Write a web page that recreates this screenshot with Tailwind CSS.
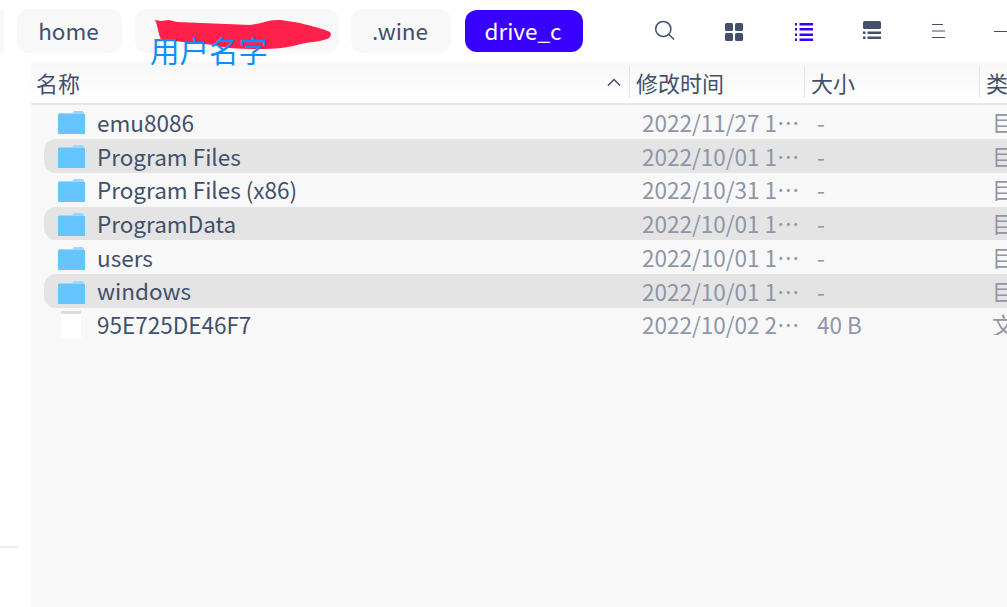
<!DOCTYPE html>
<html lang="zh">
<head>
<meta charset="UTF-8">
<title>drive_c</title>
<script src="https://cdn.jsdelivr.net/npm/@tailwindcss/browser@4"></script>
</head>
<body class="w-[1007px] h-[607px] overflow-hidden bg-white relative font-['Noto_Sans_CJK_SC','Noto_Sans',sans-serif] text-[#42506b]">

<!-- top bar -->
<div class="h-[62px] flex items-center relative">
  <div class="w-[4px] h-[44px] bg-[#f8f8f8] rounded-r-lg mr-[13px]"></div>
  <div class="w-[105px] h-[44px] bg-[#f8f8f8] rounded-xl flex items-center justify-center text-[22.5px] leading-none mr-[13px] pb-[2px] pr-[2px]">home</div>
  <div class="w-[204px] h-[44px] bg-[#f8f8f8] rounded-xl mr-[12px]"></div>
  <div class="w-[100px] h-[44px] bg-[#f8f8f8] rounded-xl flex items-center justify-center text-[22.5px] leading-none mr-[14px] pb-[2px] pr-[2px]">.wine</div>
  <div class="w-[118px] h-[42px] bg-[#3700ff] rounded-xl flex items-center justify-center text-[22.5px] leading-none text-white pb-[2px] pr-[2px]">drive_c</div>

  <svg class="absolute left-[654px] top-[20px] w-[21px] h-[21px]" viewBox="0 0 21 21" fill="none" stroke="#42506b" stroke-width="1.5"><circle cx="9.3" cy="9" r="7.6"/><path d="M15 14.5l5 5"/></svg>
  <svg class="absolute left-[725px] top-[23px] w-[18px] h-[18px]" viewBox="0 0 18 18" fill="#42506b"><rect width="8" height="8" rx="1.5"/><rect x="10" width="8" height="8" rx="1.5"/><rect y="10" width="8" height="8" rx="1.5"/><rect x="10" y="10" width="8" height="8" rx="1.5"/></svg>
  <svg class="absolute left-[795px] top-[23px] w-[18px] h-[18px]" viewBox="0 0 18 18" fill="#3700ff"><rect width="2" height="2.5"/><rect x="4.5" width="13.5" height="2.5"/><rect y="5" width="2" height="2.5"/><rect x="4.5" y="5" width="13.5" height="2.5"/><rect y="10.5" width="2" height="2.5"/><rect x="4.5" y="10.5" width="13.5" height="2.5"/><rect y="15.5" width="2" height="2.5"/><rect x="4.5" y="15.5" width="13.5" height="2.5"/></svg>
  <svg class="absolute left-[863px] top-[21px] w-[18px] h-[19px]" viewBox="0 0 18 19" fill="#42506b"><rect width="18" height="8" rx="1.5"/><rect y="10.5" width="2.5" height="2.5"/><rect x="4.5" y="10.5" width="13.5" height="2.5"/><rect y="15.5" width="2.5" height="2.5"/><rect x="4.5" y="15.5" width="13.5" height="2.5"/></svg>
  <svg class="absolute left-[931px] top-[24px] w-[14px] h-[14px]" viewBox="0 0 14 14" stroke="#42506b" stroke-width="1" fill="none"><path d="M1 .5h11M1 7h13M1 13.5h13"/></svg>
  <div class="absolute left-[994px] top-[31px] w-[13px] h-px bg-[#42506b]"></div>
</div>

<!-- left edge divider -->
<div class="absolute left-0 top-[546px] w-[18px] h-[2px] bg-[#ededed]"></div>

<!-- file list -->
<div class="absolute left-[31px] top-[62px] right-0 bottom-0 bg-[#f8f8f8]">
  <div class="h-[43px] bg-gradient-to-b from-[#f7f7f7] to-white border-b-2 border-[#e4e4e4] flex items-center text-[22px] leading-none pb-[2px]">
    <div class="w-[599px] h-[32px] flex items-center pl-[5px] pr-[8px] justify-between border-r border-[#e4e4e4]">
      <span>名称</span>
      <svg class="w-[14px] h-[8px]" viewBox="0 0 14 8" fill="none" stroke="#42506b" stroke-width="1.5"><path d="M1 7.5l6-6 6 6"/></svg>
    </div>
    <div class="w-[175px] h-[32px] flex items-center pl-[6px] border-r border-[#e4e4e4]">修改时间</div>
    <div class="w-[175px] h-[32px] flex items-center pl-[6px] border-r border-[#e4e4e4]">大小</div>
    <div class="flex-1 h-[32px] flex items-center pl-[6px] overflow-hidden whitespace-nowrap">类型</div>
  </div>

  <div class="text-[22.5px] leading-none">
    <div class="h-[33.85px] flex items-center">
      <div class="w-[598px] flex items-center pl-[27px]"><svg class="w-[27px] h-[23px] mr-[12px] mt-[2px]" viewBox="0 0 27 23"><path d="M1 2h13l2-2h9l1 2v2H1z" fill="#9ad8ff"/><rect y="3" width="27" height="20" fill="#66c4ff"/></svg><span>emu8086</span></div>
      <div class="w-[175px] pl-[13px] text-[#8f96a8]">2022/11/27 1⋯</div>
      <div class="w-[175px] pl-[13px] text-[#8f96a8]">-</div>
      <div class="flex-1 pl-[13px] text-[#8f96a8] overflow-hidden whitespace-nowrap">目录</div>
    </div>
    <div class="h-[33.85px] flex items-center bg-[#e4e4e4] ml-[13px] rounded-l-xl">
      <div class="w-[585px] flex items-center pl-[14px]"><svg class="w-[27px] h-[23px] mr-[12px] mt-[2px]" viewBox="0 0 27 23"><path d="M1 2h13l2-2h9l1 2v2H1z" fill="#9ad8ff"/><rect y="3" width="27" height="20" fill="#66c4ff"/></svg><span>Program Files</span></div>
      <div class="w-[175px] pl-[13px] text-[#8f96a8]">2022/10/01 1⋯</div>
      <div class="w-[175px] pl-[13px] text-[#8f96a8]">-</div>
      <div class="flex-1 pl-[13px] text-[#8f96a8] overflow-hidden whitespace-nowrap">目录</div>
    </div>
    <div class="h-[33.85px] flex items-center">
      <div class="w-[598px] flex items-center pl-[27px]"><svg class="w-[27px] h-[23px] mr-[12px] mt-[2px]" viewBox="0 0 27 23"><path d="M1 2h13l2-2h9l1 2v2H1z" fill="#9ad8ff"/><rect y="3" width="27" height="20" fill="#66c4ff"/></svg><span>Program Files (x86)</span></div>
      <div class="w-[175px] pl-[13px] text-[#8f96a8]">2022/10/31 1⋯</div>
      <div class="w-[175px] pl-[13px] text-[#8f96a8]">-</div>
      <div class="flex-1 pl-[13px] text-[#8f96a8] overflow-hidden whitespace-nowrap">目录</div>
    </div>
    <div class="h-[33.85px] flex items-center bg-[#e4e4e4] ml-[13px] rounded-l-xl">
      <div class="w-[585px] flex items-center pl-[14px]"><svg class="w-[27px] h-[23px] mr-[12px] mt-[2px]" viewBox="0 0 27 23"><path d="M1 2h13l2-2h9l1 2v2H1z" fill="#9ad8ff"/><rect y="3" width="27" height="20" fill="#66c4ff"/></svg><span>ProgramData</span></div>
      <div class="w-[175px] pl-[13px] text-[#8f96a8]">2022/10/01 1⋯</div>
      <div class="w-[175px] pl-[13px] text-[#8f96a8]">-</div>
      <div class="flex-1 pl-[13px] text-[#8f96a8] overflow-hidden whitespace-nowrap">目录</div>
    </div>
    <div class="h-[33.85px] flex items-center">
      <div class="w-[598px] flex items-center pl-[27px]"><svg class="w-[27px] h-[23px] mr-[12px] mt-[2px]" viewBox="0 0 27 23"><path d="M1 2h13l2-2h9l1 2v2H1z" fill="#9ad8ff"/><rect y="3" width="27" height="20" fill="#66c4ff"/></svg><span>users</span></div>
      <div class="w-[175px] pl-[13px] text-[#8f96a8]">2022/10/01 1⋯</div>
      <div class="w-[175px] pl-[13px] text-[#8f96a8]">-</div>
      <div class="flex-1 pl-[13px] text-[#8f96a8] overflow-hidden whitespace-nowrap">目录</div>
    </div>
    <div class="h-[33.85px] flex items-center bg-[#e4e4e4] ml-[13px] rounded-l-xl">
      <div class="w-[585px] flex items-center pl-[14px]"><svg class="w-[27px] h-[23px] mr-[12px] mt-[2px]" viewBox="0 0 27 23"><path d="M1 2h13l2-2h9l1 2v2H1z" fill="#9ad8ff"/><rect y="3" width="27" height="20" fill="#66c4ff"/></svg><span class="-mt-[1px]">windows</span></div>
      <div class="w-[175px] pl-[13px] text-[#8f96a8]">2022/10/01 1⋯</div>
      <div class="w-[175px] pl-[13px] text-[#8f96a8]">-</div>
      <div class="flex-1 pl-[13px] text-[#8f96a8] overflow-hidden whitespace-nowrap">目录</div>
    </div>
    <div class="h-[32px] flex items-center">
      <div class="w-[598px] flex items-center pl-[30px]"><svg class="w-[20px] h-[27px] mr-[16px]" viewBox="0 0 20 27"><rect width="20" height="27" fill="#fff"/><rect width="20" height="3" fill="#dcdcdc"/></svg><span>95E725DE46F7</span></div>
      <div class="w-[175px] pl-[13px] text-[#8f96a8]">2022/10/02 2⋯</div>
      <div class="w-[175px] pl-[13px] text-[#8f96a8]">40 B</div>
      <div class="flex-1 pl-[13px] text-[#8f96a8] overflow-hidden whitespace-nowrap">文件</div>
    </div>
  </div>
</div>

<!-- redaction scribble and label drawn over the screenshot -->
<svg class="absolute left-[150px] top-[15px] w-[190px] h-[36px]" viewBox="0 0 190 36"><path d="M5 5l6 1 8-1 8 2c24 1 50 2 73 3 10-1 18-5 27-5 8 0 14 2 23 3 12 3 24 6 30 9 2 3 0 6-3 7-8 3-20 3-30 6-14 4-30 4-44 4-14 0-28-1-40-4-14-2-36-3-52-6-3-5-3-13-6-19z" fill="#ff1f4b"/></svg>
<div class="absolute left-[150px] top-[31px] text-[29.5px] leading-[36px] text-[#0a8fff] whitespace-nowrap">用户名字</div>

</body>
</html>
